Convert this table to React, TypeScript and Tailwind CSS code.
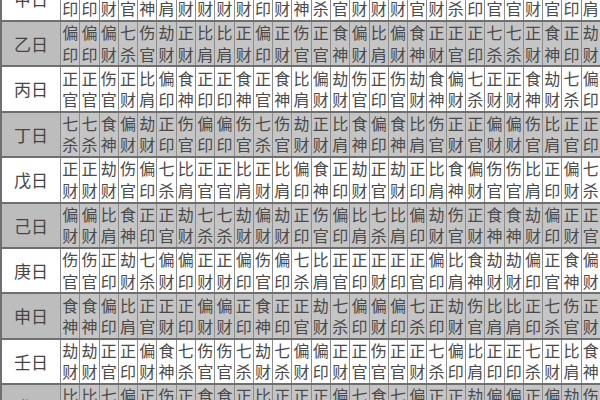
const STEMS = [0, 1, 2, 3, 4, 5, 6, 7, 8, 9];
const LABELS = ["甲日", "乙日", "丙日", "丁日", "戊日", "己日", "庚日", "申日", "壬日", "癸日"];
// stem index of each column (hidden stems of 子..亥)
const COLS = [9, 9, 5, 7, 2, 0, 4, 1, 1, 4, 9, 4, 2, 6, 3, 5, 1, 5, 3, 4, 6, 8, 7, 7, 4, 3, 8, 0];
const SAME = ["比肩", "食神", "偏财", "七杀", "偏印"];
const DIFF = ["劫财", "伤官", "正财", "正官", "正印"];

function god(day: number, other: number) {
  const d = (Math.floor(other / 2) - Math.floor(day / 2) + 5) % 5;
  return (day % 2 === other % 2 ? SAME : DIFF)[d];
}

function Row({ day }: { day: number }) {
  const gray = day % 2 === 1;
  return (
    <div
      className={`grid h-[45.4px] grid-cols-[60px_repeat(28,minmax(0,1fr))] border-b-2 border-[#6f6f6f] ${
        gray ? "bg-[#c5c5c5]" : "bg-white"
      }`}
    >
      <div
        className={`flex items-center justify-center border-l-2 border-[#6f6f6f] text-[17px] text-[#454545] ${
          gray ? "bg-[#bdbdbd]" : "bg-white"
        }`}
      >
        {LABELS[day]}
      </div>
      {COLS.map((c, i) => {
        const g = god(day, c);
        return (
          <div
            key={i}
            className="flex flex-col items-center justify-center border-l border-[#8c8c8c] text-[16px] leading-[21.5px] text-[#4a4a4a]"
          >
            <span>{g[0]}</span>
            <span>{g[1]}</span>
          </div>
        );
      })}
    </div>
  );
}

export default function App() {
  return (
    <div
      className="h-[400px] w-[600px] overflow-hidden bg-white"
      style={{ fontFamily: '"Noto Sans CJK SC", "Noto Sans", sans-serif' }}
    >
      <div className="-mt-[23.4px]">
        {STEMS.map((d) => (
          <Row key={d} day={d} />
        ))}
      </div>
    </div>
  );
}
